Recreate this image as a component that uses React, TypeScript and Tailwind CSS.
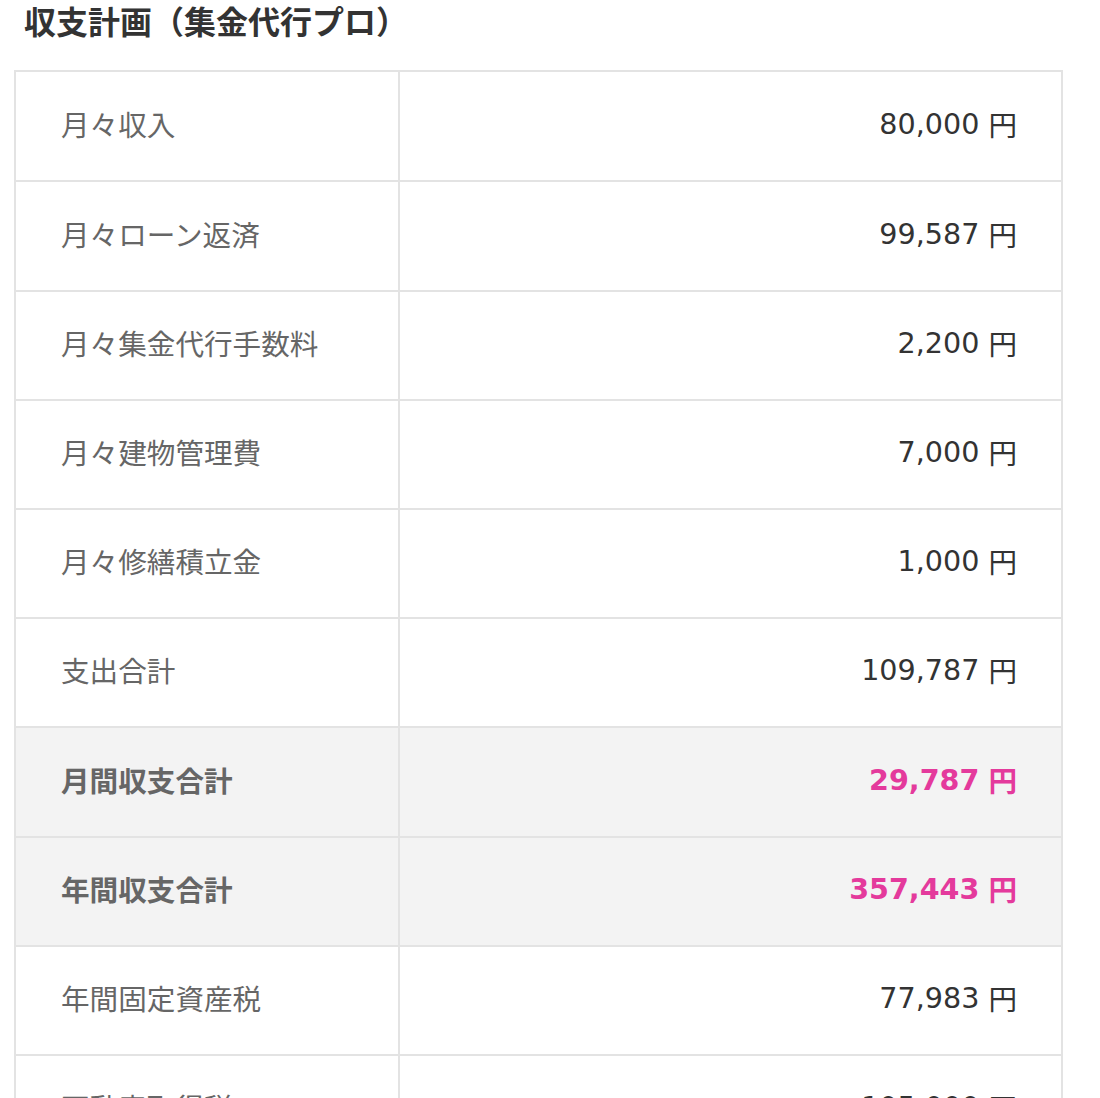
import React from "react";

type Row = { label: string; value: string; h: string; strong?: boolean };

const rows: Row[] = [
  { label: "月々収入", value: "80,000", h: "h-[110px]" },
  { label: "月々ローン返済", value: "99,587", h: "h-[110px]" },
  { label: "月々集金代行手数料", value: "2,200", h: "h-[109px]" },
  { label: "月々建物管理費", value: "7,000", h: "h-[109px]" },
  { label: "月々修繕積立金", value: "1,000", h: "h-[109px]" },
  { label: "支出合計", value: "109,787", h: "h-[109px]" },
  { label: "月間収支合計", value: "29,787", h: "h-[110px]", strong: true },
  { label: "年間収支合計", value: "357,443", h: "h-[109px]", strong: true },
  { label: "年間固定資産税", value: "77,983", h: "h-[109px]" },
  { label: "不動産取得税", value: "105,000", h: "h-[109px]" },
];

export default function App() {
  return (
    <div className="w-[1100px] h-[1098px] overflow-hidden bg-white font-['Noto_Sans_CJK_JP','Noto_Sans',sans-serif]">
      <h1 className="pl-[24px] text-[32px] leading-[40px] font-bold text-[#333333]">
        収支計画（集金代行プロ）
      </h1>
      <div className="mt-[30px] ml-[14px] w-[1049px] border-x-2 border-[#e3e3e3]">
        {rows.map((r) => (
          <div
            key={r.label}
            className={`flex border-t-2 border-[#e3e3e3] ${r.h} ${
              r.strong ? "bg-[#f3f3f3]" : "bg-white"
            }`}
          >
            <div
              className={`w-[384px] shrink-0 border-r-2 border-[#e3e3e3] flex items-center pl-[45px] pb-[4px] text-[28.6px] text-[#666666] ${
                r.strong ? "font-bold" : "font-normal"
              }`}
            >
              {r.label}
            </div>
            <div
              className={`flex-1 flex items-center justify-end pr-[44px] pb-[4px] text-[28.6px] ${
                r.strong ? "font-bold text-[#e43a9c]" : "font-normal text-[#333333]"
              }`}
            >
              <span className="font-['DejaVu_Sans','Noto_Sans_CJK_JP',sans-serif]">
                {r.value}
              </span>
              <span className="ml-[9px]">円</span>
            </div>
          </div>
        ))}
      </div>
    </div>
  );
}
